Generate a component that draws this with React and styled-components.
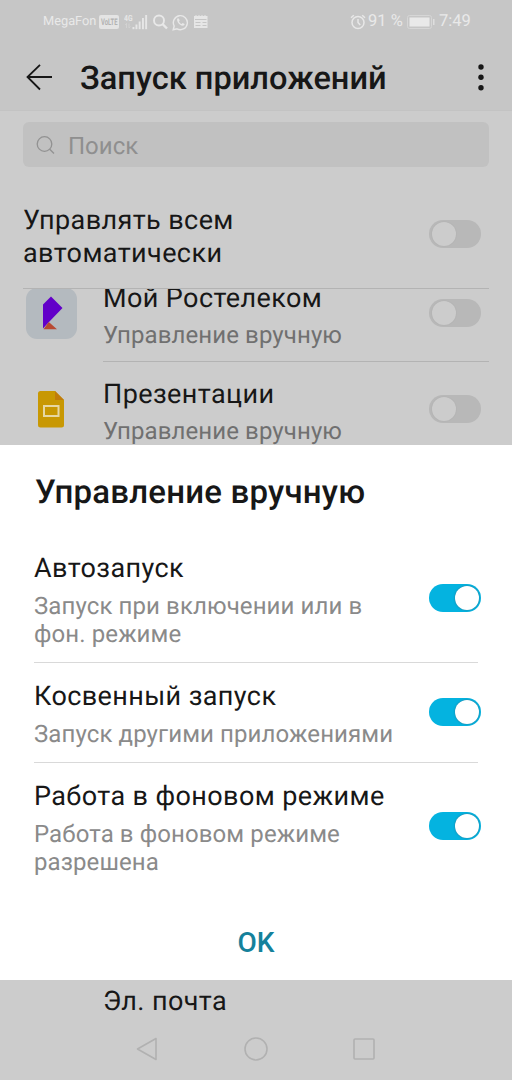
// App.jsx
import styled, { createGlobalStyle } from "styled-components";

const GlobalStyle = createGlobalStyle`
  * {
    box-sizing: border-box;
  }

  body {
    margin: 0;
    background: #cccccc;
    font-family: Roboto, "Noto Sans", sans-serif;
    color: #171717;
    text-rendering: geometricPrecision;
  }
`;

const Screen = styled.div`
  width: 512px;
  height: 1080px;
  display: flex;
  flex-direction: column;
  overflow: hidden;
  background: #cccccc;
`;

const Backdrop = styled.div`
  height: 445px;
  flex: none;
  display: flex;
  flex-direction: column;
  overflow: hidden;
`;

const TopArea = styled.div`
  height: 111px;
  flex: none;
  background: #c6c6c6;
  border-bottom: 1px solid #c3c3c3;
`;

const StatusBar = styled.div`
  height: 44px;
  padding: 0 40px 0 43px;
  display: flex;
  align-items: center;
  justify-content: space-between;
  color: #e9e9e9;
`;

const StatusGroup = styled.div`
  display: flex;
  align-items: center;
  height: 44px;
`;

const StatusText = styled.span`
  width: ${(props) => props.$width}px;
  font-size: ${(props) => props.$size}px;
  line-height: 20px;
  margin-left: ${(props) => props.$left || 0}px;
  white-space: nowrap;
`;

const StatusIcon = styled.svg`
  display: block;
  flex: none;
  margin-left: ${(props) => props.$left || 0}px;
`;

const AppBar = styled.header`
  height: 66px;
  padding: 0 24px 0 26px;
  display: flex;
  align-items: center;
`;

const PageTitle = styled.h1`
  flex: 1;
  margin: 1px 0 0 27px;
  font-size: 32.6px;
  font-weight: 500;
  line-height: 38px;
  white-space: nowrap;
`;

const SearchBox = styled.div`
  height: 45px;
  flex: none;
  margin: 11px 23px 0;
  padding: 2px 0 0 13px;
  display: flex;
  align-items: center;
  gap: 13px;
  border-radius: 6px;
  background: #c1c1c1;
  color: #8f8f8f;
  font-size: 24px;
  line-height: 28px;
`;

const ManageAll = styled.div`
  height: 122px;
  flex: none;
  margin: 0 23px;
  padding: 12px 8px 0 0;
  display: flex;
  align-items: center;
  justify-content: space-between;
  border-bottom: 1px solid #b3b3b3;
`;

const ManageAllText = styled.div`
  padding-top: 6px;
`;

const Label = styled.div`
  font-size: 27px;
  line-height: 33px;
  letter-spacing: 0.4px;
  white-space: pre-line;
`;

const Hint = styled.div`
  margin-top: ${(props) => props.$top || 6}px;
  font-size: 24px;
  line-height: 28px;
  letter-spacing: 0.1px;
  color: ${(props) => props.$color || "#707070"};
  white-space: pre-line;
`;

const AppList = styled.div`
  flex: 1;
  min-height: 0;
  padding: 0 23px;
  overflow: hidden;
`;

const AppRow = styled.div`
  height: 96px;
  display: flex;

  &:first-child {
    margin-top: -23px;
  }
`;

const AppIconCell = styled.div`
  width: 80px;
  padding: 0 0 1px 3px;
  display: flex;
  align-items: center;
`;

const AppRowBody = styled.div`
  flex: 1;
  padding: 16px 8px 0 0;
  display: flex;
  justify-content: space-between;
  border-bottom: 1px solid #b3b3b3;
`;

const AppRowSwitch = styled.div`
  padding-top: 17px;
`;

const Track = styled.div`
  width: 52px;
  height: 28px;
  flex: none;
  padding: 2px;
  display: flex;
  justify-content: ${(props) => (props.$on ? "flex-end" : "flex-start")};
  border-radius: 14px;
  background: ${(props) => (props.$on ? "#04b3e0" : "#b8b8b8")};
`;

const Knob = styled.div`
  width: 24px;
  height: 24px;
  margin-left: 1px;
  border-radius: 50%;
  background: ${(props) => (props.$on ? "#ffffff" : "#cccccc")};
  box-shadow: 0 0 2px
    ${(props) => (props.$on ? "rgba(60, 90, 110, 0.7)" : "rgba(0, 0, 0, 0.06)")};
`;

const Sheet = styled.section`
  height: 535px;
  flex: none;
  padding: 28px 34px 0 34px;
  display: flex;
  flex-direction: column;
  background: #ffffff;
`;

const SheetTitle = styled.h2`
  margin: 0 0 24px 1px;
  font-size: 33px;
  font-weight: 500;
  line-height: 39px;
  letter-spacing: 0.2px;
  white-space: nowrap;
`;

const Option = styled.div`
  padding: 16px 0 14px;
  display: flex;
  align-items: center;
  justify-content: space-between;
  border-bottom: 1px solid ${(props) => (props.$last ? "transparent" : "#d9d9d9")};

  & + & {
    padding-top: 17px;
  }
`;

const OptionSwitch = styled.div`
  margin: -4px -3px 0 0;
`;

const OkButton = styled.button`
  align-self: center;
  margin-top: 34px;
  padding: 0;
  border: none;
  background: none;
  color: #15819b;
  font-family: inherit;
  font-size: 28px;
  font-weight: 500;
  line-height: 36px;
`;

const Bottom = styled.div`
  height: 100px;
  flex: none;
  padding: 5px 0 0 103px;
`;

const NavBar = styled.nav`
  height: 62px;
  margin: 0 0 0 -103px;
  padding: 0 137px 0 136px;
  display: flex;
  align-items: center;
  justify-content: space-between;
`;

function Toggle({ on }) {
  return (
    <Track $on={on} role="switch" aria-checked={!!on}>
      <Knob $on={on} />
    </Track>
  );
}

const VolteBadge = () => (
  <StatusIcon $left={1} width="20" height="14" viewBox="0 0 20 14">
    <rect width="20" height="14" rx="2" fill="#e4e4e4" />
    <text
      x="2"
      y="10.300"
      textLength="16.500"
      lengthAdjust="spacingAndGlyphs"
      fontFamily="Roboto"
      fontSize="9"
      fontWeight="700"
      fill="#b2b2b2"
    >
      VoLTE
    </text>
  </StatusIcon>
);

const SignalIcon = () => (
  <StatusIcon $left={5} width="24" height="17" viewBox="0 0 24 17" fill="#e6e6e6">
    <text
      x="0"
      y="7"
      textLength="8.500"
      lengthAdjust="spacingAndGlyphs"
      fontFamily="Roboto"
      fontSize="8.500"
      fontWeight="700"
    >
      4G
    </text>
    <path d="M2.500 14V9.500L1.200 11M5 9.500V14L6.300 12.500" stroke="#d4d4d4" fill="none" strokeWidth="0.900" />
    <rect x="8.500" y="13" width="1.900" height="2.200" />
    <rect x="11.500" y="10.500" width="1.900" height="4.700" />
    <rect x="14.700" y="7.500" width="1.900" height="7.700" />
    <rect x="18" y="4" width="1.900" height="11.200" />
    <rect x="21.200" y="1" width="1.900" height="14.200" />
  </StatusIcon>
);

const RostelecomIcon = () => (
  <svg width="51" height="51" viewBox="0 0 51 51">
    <rect width="51" height="51" rx="11" fill="#b4babf" />
    <path d="M17 40.500V16.500L25 8.500L36.500 20L22.500 34.500Z" fill="#6200c9" />
    <path d="M17.500 41.300L22.800 34L31 41.300Z" fill="#b84a32" />
  </svg>
);

const SlidesIcon = () => (
  <svg width="51" height="51" viewBox="0 0 51 51">
    <path
      d="M14.500 7H29L38 16V41Q38 43.500 35.500 43.500H14.500Q12 43.500 12 41V9.500Q12 7 14.500 7Z"
      fill="#c89803"
    />
    <path d="M29 7L38 16H29Z" fill="#c07c0c" />
    <rect x="18" y="22" width="14.500" height="10" fill="none" stroke="#e6d7a3" strokeWidth="2" />
  </svg>
);

const apps = [
  { name: "Мой Ростелеком", icon: <RostelecomIcon /> },
  { name: "Презентации", icon: <SlidesIcon /> },
];

const options = [
  { name: "Автозапуск", hint: "Запуск при включении или в\nфон. режиме" },
  { name: "Косвенный запуск", hint: "Запуск другими приложениями" },
  { name: "Работа в фоновом режиме", hint: "Работа в фоновом режиме\nразрешена" },
];

const App = () => {
  return (
    <>
      <GlobalStyle />
      <Screen>
        <Backdrop>
          <TopArea>
            <StatusBar>
              <StatusGroup>
                <StatusText $size={12.8} $width={55}>MegaFon</StatusText>
                <VolteBadge />
                <SignalIcon />
                <StatusIcon $left={5} width="16" height="16" viewBox="0 0 16 16" fill="none" stroke="#e8e8e8">
                  <circle cx="6" cy="6.500" r="5" strokeWidth="1.900" />
                  <path d="M9.500 10L14 14.500" strokeWidth="2.400" />
                </StatusIcon>
                <StatusIcon $left={3} width="17" height="17" viewBox="0 0 17 17" fill="none" stroke="#e8e8e8">
                  <path d="M1.200 15.800L2.200 12A7 7 0 1 1 5 14.800Z" strokeWidth="1.400" />
                  <path
                    d="M5.300 4.600C4 7 8 12.600 11.500 11.600C12.600 11.200 12.700 10.300 12.500 10L10.700 9L9.600 10C8.400 9.600 7.400 8.500 7 7.400L7.700 6.500L6.900 4.600Z"
                    fill="#e8e8e8"
                    stroke="none"
                  />
                </StatusIcon>
                <StatusIcon $left={4} width="15" height="14" viewBox="0 0 15 14">
                  <path
                    d="M1 1H2.500V0H3.500V1H5.500V0H6.500V1H8.500V0H9.500V1H11.500V0H12.500V1H14.500V13H1Z"
                    fill="#e6e6e6"
                  />
                  <path d="M2 4.500H13.500M2.500 7.500H7.500M2.500 10.500H7.500M9.500 7.500H13.500M9.500 10.500H13.500" stroke="#c6c6c6" strokeWidth="1" />
                </StatusIcon>
              </StatusGroup>
              <StatusGroup>
                <StatusIcon width="16" height="16" viewBox="0 0 16 16" fill="none" stroke="#e8e8e8" strokeWidth="1.500">
                  <circle cx="8" cy="8.500" r="6" />
                  <path d="M8 5V8.500L10.200 11M1 3.800L3.800 1.300M15 3.800L12.200 1.300" />
                </StatusIcon>
                <StatusText $size={16.5} $left={2} $width={35}>91 %</StatusText>
                <StatusIcon $left={4} width="28" height="14" viewBox="0 0 28 14">
                  <rect x="0.500" y="0.500" width="24" height="13" rx="2" fill="none" stroke="#d6d6d6" />
                  <rect x="2.500" y="2.500" width="20" height="9" fill="#e9e9e9" />
                  <rect x="26" y="4" width="1.500" height="6" fill="#dedede" />
                </StatusIcon>
                <StatusText $size={16.5} $left={4} $width={33}>7:49</StatusText>
              </StatusGroup>
            </StatusBar>
            <AppBar>
              <svg width="27" height="27" viewBox="0 0 27 27" fill="none" stroke="#171717" strokeWidth="1.800">
                <path d="M26 13H1.500M14 0.800L1.500 13L14 25.500" />
              </svg>
              <PageTitle>Запуск приложений</PageTitle>
              <svg width="14" height="27" viewBox="0 0 14 27" fill="#171717">
                <circle cx="7" cy="3" r="2.700" />
                <circle cx="7" cy="13.300" r="2.700" />
                <circle cx="7" cy="23.700" r="2.700" />
              </svg>
            </AppBar>
          </TopArea>
          <SearchBox>
            <svg width="19" height="19" viewBox="0 0 19 19" fill="none" stroke="#929292" strokeWidth="1.300">
              <circle cx="8.500" cy="8" r="7.300" />
              <path d="M13.700 13.200L18 17.500" />
            </svg>
            <span>Поиск</span>
          </SearchBox>
          <ManageAll>
            <ManageAllText>
              <Label>{"Управлять всем\nавтоматически"}</Label>
            </ManageAllText>
            <Toggle />
          </ManageAll>
          <AppList>
            {apps.map((app) => (
              <AppRow key={app.name}>
                <AppIconCell>{app.icon}</AppIconCell>
                <AppRowBody>
                  <div>
                    <Label>{app.name}</Label>
                    <Hint>Управление вручную</Hint>
                  </div>
                  <AppRowSwitch>
                    <Toggle />
                  </AppRowSwitch>
                </AppRowBody>
              </AppRow>
            ))}
          </AppList>
        </Backdrop>
        <Sheet>
          <SheetTitle>Управление вручную</SheetTitle>
          {options.map((option, i) => (
            <Option key={option.name} $last={i === options.length - 1}>
              <div>
                <Label>{option.name}</Label>
                <Hint $color="#8a8a8a" $top={7}>{option.hint}</Hint>
              </div>
              <OptionSwitch>
                <Toggle on />
              </OptionSwitch>
            </Option>
          ))}
          <OkButton>OK</OkButton>
        </Sheet>
        <Bottom>
          <Label>Эл. почта</Label>
          <NavBar>
            <svg width="22" height="24" viewBox="0 0 22 24" fill="none" stroke="#b1b1b1" strokeWidth="1.600">
              <path d="M20 1.500V22.500L1.500 12Z" strokeLinejoin="round" />
            </svg>
            <svg width="24" height="24" viewBox="0 0 24 24" fill="none" stroke="#b1b1b1" strokeWidth="1.600">
              <circle cx="12" cy="12" r="11" />
            </svg>
            <svg width="22" height="22" viewBox="0 0 22 22" fill="none" stroke="#b1b1b1" strokeWidth="1.600">
              <rect x="1" y="1" width="20" height="20" rx="1" />
            </svg>
          </NavBar>
        </Bottom>
      </Screen>
    </>
  );
};

export default App;
